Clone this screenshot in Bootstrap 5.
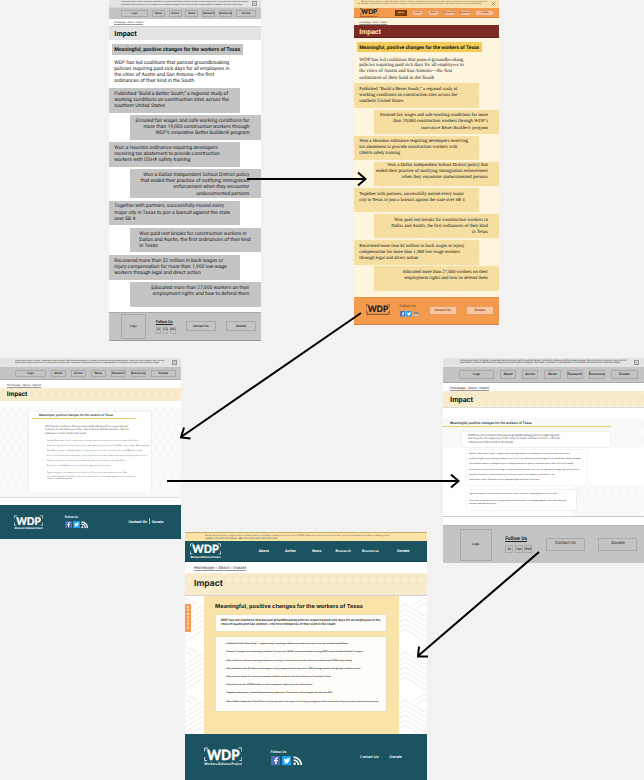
<!DOCTYPE html>
<html lang="en">
<head>
<meta charset="utf-8">
<meta name="viewport" content="width=device-width, initial-scale=1">
<title>Impact page iterations</title>
<link href="https://cdn.jsdelivr.net/npm/bootstrap@5.3.0/dist/css/bootstrap.min.css" rel="stylesheet">
<style>
:root{--hexc:url("data:image/svg+xml,%3Csvg xmlns='http://www.w3.org/2000/svg' width='8' height='13.8'%3E%3Cpath d='M4 0v2.3L8 4.6v4.6L4 11.5 0 9.2V4.6L4 2.3M4 11.5v2.3' fill='none' stroke='%23f1e1b0' stroke-width='.6'/%3E%3C/svg%3E");
--hexg:url("data:image/svg+xml,%3Csvg xmlns='http://www.w3.org/2000/svg' width='8' height='13.8'%3E%3Cpath d='M4 0v2.3L8 4.6v4.6L4 11.5 0 9.2V4.6L4 2.3M4 11.5v2.3' fill='none' stroke='%23f1f1f1' stroke-width='.5'/%3E%3C/svg%3E");
--leaf:url("data:image/svg+xml,%3Csvg xmlns='http://www.w3.org/2000/svg' width='40' height='48'%3E%3Cpath d='M0 20L20 8 40 20M0 25L20 13 40 25M0 30L20 18 40 30M0 35L20 23 40 35M0 40L20 28 40 40M0 45L20 33 40 45M0 2L12 9M0 7L8 12M40 2L28 9M40 7L32 12' fill='none' stroke='%23f3f3f3' stroke-width='1.5'/%3E%3C/svg%3E")}
html,body{margin:0;width:644px;height:780px;overflow:hidden;background:#f2f2f2}
body{font-family:Roboto,"Liberation Sans",sans-serif;color:#222;text-rendering:geometricPrecision}
.board{width:644px;height:780px}
.frame{position:absolute;background:#fff;overflow:hidden;display:flex;flex-direction:column}
.frame>*{flex:none}
.ln{white-space:nowrap;width:max-content}
.b{font-weight:700}
.bx{display:flex;align-items:center;justify-content:center;border:.8px solid #a9a9a9;color:#222;font-weight:500;flex:none;line-height:1}
.strip{background:#e3e3e3;display:flex;justify-content:space-between;line-height:2.2px;font-size:2.3px;color:#333}
.gray{background:#c4c4c4}
.bar{display:flex;align-items:center;justify-content:space-between}
.xbox{border:.6px solid #999;width:5px;height:5px;color:#666}
.xbox svg{display:block;width:100%;height:100%}
.crumb{display:flex;align-items:center;text-decoration:underline;text-decoration-color:#999;color:#333}
.ttl{display:flex;align-items:center;font-weight:700;color:#111}
.hex{background:#f8edce var(--hexc)}
.hexgray{background:#fafafa var(--hexg)}
.teal{background:#1b5460;color:#fff}
.serif{font-family:"Liberation Serif",serif}
.logo{display:block;flex:none}
.soc{display:block;flex:none}

/* wireframe */
#wa{left:109px;top:0;width:152px;height:341px}
#wa .strip{height:8px;padding:1.4px 4px 0 12px;border-bottom:.6px solid #d4d4d4}
#wa nav{height:11.3px;padding:0 5px 0 12px;}
#wa nav .bx{width:13px;height:6.6px;font-size:2.7px}
#wa .crumb{height:6.7px;padding:1px 0 0 5px;font-size:3px}
#wa .ttl{height:14.4px;background:#e3e3e3;padding:.6px 0 0 5.3px;font-size:8.2px;border-top:.8px solid #cfcfcf}
#wa .hd{width:131px;height:11px;margin:3.6px 0 0 3px;background:#c4c4c4;line-height:12.6px;padding-left:2.3px;font-size:5.6px;color:#111}
#wa .par{margin:4.7px 0 0 5.3px;height:28.3px;line-height:6.15px;font-size:5.3px}
#wa .item{width:131px;height:24.8px;background:#c4c4c4;margin-bottom:2.3px;padding:2.9px 0 0 5.3px;line-height:6.15px;font-size:5.3px}
#wa .item.r{margin-left:21px;padding:2.9px 11.7px 0 0}
#wa .item.r .ln{margin-left:auto}
#wa footer{height:29.4px;margin-top:2.3px;border-top:.8px solid #aaa;border-bottom:1px solid #999;padding:0 5px 0 12px}

/* warm colour version */
#wb{left:354px;top:0;width:145px;height:325px;background:#fef5df}
#wb .strip{height:7.5px;background:#f7e2ae;padding:1px 3.5px 0 3px;color:#6b5b33}
#wb nav{height:10.8px;background:#f49a4c;border-bottom:.8px solid #d9843a;padding:.9px 4.5px 0 5.5px}
#wb nav .bx{width:11px;height:6px;background:#f9bf98;border-color:#e39a63;font-size:2.2px;color:#7b3513}
#wb nav .bx.on{background:#8a420f;color:#fbd9ad;border-color:#713408}
#wb .crumb{height:6.9px;padding-left:5.3px;padding-top:1.9px;font-size:2.7px}
#wb .ttl{height:13px;background:#7a2b25;color:#fbe6d0;padding:1.4px 0 0 5.3px;font-size:7.8px;border-bottom:.8px solid #5e1e19}
#wb .hd{width:125px;height:10px;margin:3.9px 0 0 3px;background:#f3cb58;line-height:12px;padding-left:2.3px;font-size:5.3px;color:#111;box-shadow:0 .3px .6px #dcc07a}
#wb .par{margin:4.6px 0 0 5.3px;height:26.7px;line-height:6.05px;font-size:5.3px;color:#111}
#wb .item{color:#111;width:125px;height:24.4px;background:#f4dd9f repeating-linear-gradient(45deg,transparent 0 2px,#f5e0a6 2px 3px);margin-bottom:1.75px;padding:3.6px 0 0 5.3px;line-height:6.05px;font-size:5.3px;box-shadow:0 .3px .6px #e6d5a2}
#wb .item.r{margin-left:20px;padding:3.6px 11.2px 0 0}
#wb .item.r .ln{margin-left:auto}
#wb footer{height:28px;margin-top:4.5px;background:#f49a4c;border-bottom:1px solid #c98149;border-top:.7px solid #e18f4a;padding:0 5px 1px 12px}
#wb footer .bx{background:#f9c79f;border-color:#e39a63;width:28px;height:8.4px;font-size:3.4px;color:#84351e}

/* pattern draft with teal footer */
#wc{left:0;top:358px;width:181px;height:181px}
#wc .strip{height:8.7px;padding:1.6px 4.5px 0 15px}
#wc nav{height:13.5px;padding:1px 5.5px 0 15px;border-bottom:.7px solid #aaa}
#wc nav .bx{width:14.5px;height:7.6px;font-size:3px}
#wc .crumb{height:8px;padding:2px 0 0 6.8px;font-size:3.3px}
#wc .ttl{height:12.4px;padding:.8px 0 0 6.8px;font-size:7px}
#wc main{height:90px;margin-top:7.4px;padding:4px 0 0 29px;border-bottom:.8px solid #ddd}
#wc .sheet{width:122px;height:79.6px;background:#fff;box-shadow:0 .4px 1.5px #ccc;padding:1.3px 0 0 2.6px}
#wc .hd{line-height:4px;font-size:3.2px;padding-left:7.4px;border-bottom:.8px solid #eccb6b;width:104.6px;height:5.4px;color:#444}
#wc .par{margin:6.2px 0 0 13.4px;line-height:3.35px;font-size:3.4px;color:#333}
#wc .list{margin:5.6px 0 0 15.4px;font-size:2.35px;line-height:2.2px;color:#111}
#wc .list .ln{margin-bottom:2.7px}
#wc footer{height:34.3px;margin-top:6.7px;padding:0 17.5px 0 14px}

/* layered draft */
#wd{left:443px;top:358px;width:201px;height:205px}
#wd .strip{height:9px;padding:1.5px 5px 0 17px}
#wd nav{height:16px;padding:.6px 6px 0 16px;border-bottom:.8px solid #aaa}
#wd nav .bx{width:16.3px;height:9px;font-size:3.4px}
#wd .crumb{height:8.3px;padding:2px 0 0 7px;font-size:3.7px}
#wd .ttl{height:16.3px;padding:.2px 0 0 7px;font-size:8px;border-bottom:.8px solid #ddd}
#wd .up{height:30.7px;margin-top:10.2px}
#wd .hd{width:167.5px;height:8.8px;line-height:4px;padding:3px 0 0 7px;font-size:3.6px;border-bottom:.8px solid #eccb6b;color:#444}
#wd .par{width:148.5px;height:15.5px;margin:5px 0 0 18.5px;padding:2px 0 0 6.5px;background:#fff;box-shadow:0 .3px 1.2px #ccc;line-height:3.65px;font-size:3.7px;color:#333}
#wd .low{height:69px;display:flex;flex-direction:column;background:#fff;border-bottom:.8px solid #ccc;padding-left:24px}
#wd .list{background:#fff;box-shadow:0 .4px 1.2px #ccc;font-size:2.5px;line-height:2.4px;color:#111;padding:2.8px 0 0 2px}
#wd .l1{width:119.5px;height:35.5px;margin-top:1.4px}
#wd .l1 .ln{margin-bottom:2.95px}
#wd .l2{width:109px;height:20px}
#wd .corner{height:32.1px;margin:0 0 0 105px;padding:0}
#wd .corner .l2{margin:5px 0 0 -105px}
#wd footer{height:38px;margin-top:7.6px;padding:0 6.5px 0 16.5px;border-top:.7px solid #b5b5b5}

/* final page */
#we{left:185px;top:532px;width:242px;height:248px;font-family:Inter,sans-serif}
#we .strip{height:9.3px;background:#f9e3a6;padding:2px 0 0 20px;line-height:2.7px;font-size:2.4px;border-top:.7px solid #c8ad6a}
#we nav{height:20.7px;padding:0 17.5px 0 5px;border-bottom:.8px solid #10414c;font-weight:700;font-size:3.4px}
#we nav .ln,#we footer .ln{line-height:6px}
#we .crumb{height:11px;padding:1.6px 0 0 9px;font-size:3.9px}
#we .ttl{height:21.6px;padding:1.6px 0 0 9px;font-size:8.6px;color:#2a2a2a}
#we main{height:139.4px;border-top:1px solid #d5d5d5;background:#fff var(--leaf);display:flex}
#we .tab{width:6.3px;height:27.5px;margin:8.5px 12.4px 0 0;background:#f49a4c;color:#fff;font-size:3px;line-height:3.5px;text-align:center;padding-top:1.5px;border-radius:0 .8px .8px 0;font-weight:600}
#we .panel{width:195px;background:#f9e3a8;padding:8px 0 0 11.4px}
#we .hd{font-size:5.6px;line-height:6px;color:#222}
#we .sheet{width:171.6px;background:#fffdf8;border:.6px solid #ece0b6}
#we .s1{margin-top:4.8px;height:17.8px;padding:2.2px 0 0 4.6px;font-size:3.2px;line-height:4.4px;font-weight:600}
#we .s2{margin-top:4.3px;height:75.5px;padding:4.8px 0 0 9.4px;font-size:2.5px;line-height:4px;color:#000;font-weight:600}
#we .s2 .ln{margin-bottom:4.2px}
#we footer{height:46px;padding:0 25px 0 18.5px;font-weight:600}
.arrows{position:absolute;left:0;top:0;pointer-events:none}
</style>
</head>
<body>
<svg width="0" height="0" class="position-absolute"><defs>
<symbol id="wdp" viewBox="0 0 38 19"><path d="M4 1H.6V4.500M34 1H37.400V4.500M.6 10V13.500H3M37.400 10V13.500H35" fill="none" stroke="currentColor" stroke-width=".8"/><text x="2.800" y="12.600" textLength="32.400" lengthAdjust="spacingAndGlyphs" font-family="Lato,sans-serif" font-weight="900" font-size="14" fill="currentColor" stroke="currentColor" stroke-width=".3">WDP</text><text x=".3" y="18" textLength="37.400" lengthAdjust="spacingAndGlyphs" font-family="Inter,sans-serif" font-weight="700" font-size="3.300" fill="currentColor">Workers Defense Project</text></symbol>
<symbol id="fb" viewBox="0 0 20 20"><rect width="20" height="20" rx="2" fill="#4f6fb5"/><path d="M11.500 17V11H14L14.400 8.400H11.500V7Q11.500 5.700 13 5.700H14.500V3.300H12.300Q8.700 3.300 8.700 6.800V8.400H6.300V11H8.700V17Z" fill="#fff"/></symbol>
<symbol id="tw" viewBox="0 0 20 20"><rect width="20" height="20" rx="2" fill="#1da1f2"/><path d="M3.500 14.200Q6.200 14.300 7.500 13.200 5.500 12.800 5 11.200H6.200Q4.200 10.300 4.200 8.200L5.500 8.600Q3.600 6.800 4.800 4.800 7 7.400 10.300 7.600 9.700 4.200 12.900 4 14.200 4 15 4.900L16.800 4.300 15.700 5.900 17.200 5.600 15.800 7.100Q15.800 12 12 14.500 7.700 16.900 3.500 14.200Z" fill="#fff"/></symbol>
<symbol id="rss" viewBox="0 0 20 20"><circle cx="3.500" cy="16.500" r="2.600" fill="currentColor"/><path d="M1 8.500A10.500 10.500 0 0 1 11.500 19M1 2.500A16.500 16.500 0 0 1 17.500 19" fill="none" stroke="currentColor" stroke-width="3.600"/></symbol>
<symbol id="ex" viewBox="0 0 10 10"><path d="M1 1L9 9M9 1L1 9" stroke="currentColor" stroke-width="1.200"/></symbol>
</defs></svg>

<div class="board position-relative">

<section class="frame" id="wa">
<div class="strip"><div><div class="ln" data-w="127">Lorem ipsum dolor sit amet, consectetur adipiscing elit, sed do eiusmod tempor incididunt ut labore et dolore magna aliqua. Ut enim ad minim veniam, quis nostrud</div><div class="ln" data-w="122">exercitation ullamco laboris nisi ut aliquip ex ea commodo consequat. Duis aute irure dolor in reprehenderit in voluptate velit esse cillum dolore</div></div><div class="xbox"><svg><use href="#ex"/></svg></div></div>
<nav class="bar gray"><div class="bx" style="width:27px">Logo</div><div class="bx">About</div><div class="bx">Action</div><div class="bx">News</div><div class="bx">Research</div><div class="bx">Resources</div><div class="bx" style="width:20px">Donate</div></nav>
<div class="crumb"><span class="ln" data-w="29">Homepage › About › Impact</span></div>
<div class="ttl"><span class="ln" data-w="22.5">Impact</span></div>
<div class="hd b"><div class="ln" data-w="126">Meaningful, positive changes for the workers of Texas</div></div>
<div class="par"><div class="ln" data-w="115">WDP has led coalitions that passed groundbreaking</div><div class="ln" data-w="115.500">policies requiring paid sick days for all employees in</div><div class="ln" data-w="100">the cities of Austin and San Antonio—the first</div><div class="ln" data-w="80">ordinances of their kind in the South</div></div>
<div class="item"><div class="ln" data-w="114">Published “Build a Better South,” a regional study of</div><div class="ln" data-w="115">working conditions on construction sites across the</div><div class="ln" data-w="51">southern United States</div></div>
<div class="item r"><div class="ln" data-w="114">Ensured fair wages and safe working conditions for</div><div class="ln" data-w="106">more than 19,000 construction workers through</div><div class="ln" data-w="94">WDP’s innovative Better Builder® program</div></div>
<div class="item"><div class="ln" data-w="103.500">Won a Houston ordinance requiring developers</div><div class="ln" data-w="105.500">receiving tax abatement to provide construction</div><div class="ln" data-w="76">workers with OSHA safety training</div></div>
<div class="item r" style="height:29px"><div class="ln" data-w="106.500">Won a Dallas Independent School District policy</div><div class="ln" data-w="109">that ended their practice of notifying immigration</div><div class="ln" data-w="76">enforcement when they encounter</div><div class="ln" data-w="53">undocumented persons</div></div>
<div class="item"><div class="ln" data-w="109.500">Together with partners, successfully moved every</div><div class="ln" data-w="116">major city in Texas to join a lawsuit against the state</div><div class="ln" data-w="21">over SB 4</div></div>
<div class="item r d-flex flex-column"><div class="me-0 ms-auto" style="width:110px"><div class="ln mx-0" data-w="107.500">Won paid rest breaks for construction workers in</div><div class="ln mx-0" data-w="111.500">Dallas and Austin, the first ordinances of their kind</div><div class="ln mx-0" data-w="18.500">in Texas</div></div></div>
<div class="item" style="margin-top:.500px"><div class="ln" data-w="109">Recovered more than $2 million in back wages or</div><div class="ln" data-w="112.500">injury compensation for more than 1,900 low-wage</div><div class="ln" data-w="86.500">workers through legal and direct action</div></div>
<div class="item r"><div class="ln" data-w="98">Educated more than 27,000 workers on their</div><div class="ln" data-w="97">employment rights and how to defend them</div></div>
<footer class="bar gray"><div class="bx" style="width:24.500px;height:24.500px;font-size:3px">Logo</div><div style="width:20px;height:19px"><div class="ln b text-decoration-underline" data-w="17" style="font-size:4.200px;line-height:9px">Follow Us</div><div class="d-flex justify-content-between" style="margin-top:1.500px"><div class="bx" style="width:5.500px;height:6.500px;font-size:2.600px">fb</div><div class="bx" style="width:5.500px;height:6.500px;font-size:2.600px">Twt</div><div class="bx" style="width:6px;height:6.500px;font-size:2.600px">RSS</div></div></div><div class="bx" style="width:30px;height:10px;font-size:3.200px">Contact Us</div><div class="bx" style="width:30px;height:10px;font-size:3.200px">Donate</div></footer>
</section>

<section class="frame" id="wb">
<div class="strip"><div><div class="ln ms-1" data-w="126">Workers Defense Project's physical offices in Austin, Houston, and Dallas are closed to the public due to coronavirus concerns and the health of</div><div class="ln" data-w="125">our members, staff and community. Our staff continue to work remotely and our hotline remains open. We hope you stay safe and healthy</div></div><svg width="5" height="5"><use href="#ex"/></svg></div>
<nav class="bar"><svg class="logo" width="18.500" height="9.300"><use href="#wdp"/></svg><div class="bar" style="width:99.500px"><div class="bx on" style="width:12px">About</div><div class="bx">Action</div><div class="bx">News</div><div class="bx">Research</div><div class="bx">Resources</div><div class="bx" style="width:19px">Donate</div></div></nav>
<div class="crumb"><span class="ln" data-w="28">Homepage › About › Impact</span></div>
<div class="ttl"><span class="ln" data-w="21.500">Impact</span></div>
<div class="hd b"><div class="ln" data-w="120">Meaningful, positive changes for the workers of Texas</div></div>
<div class="par serif"><div class="ln" data-w="104.500">WDP has led coalitions that passed groundbreaking</div><div class="ln" data-w="104.500">policies requiring paid sick days for all employees in</div><div class="ln" data-w="93">the cities of Austin and San Antonio—the first</div><div class="ln" data-w="75">ordinances of their kind in the South</div></div>
<div class="item serif"><div class="ln" data-w="98.500">Published “Build a Better South,” a regional study of</div><div class="ln" data-w="98">working conditions on construction sites across the</div><div class="ln" data-w="44">southern United States</div></div>
<div class="item r serif"><div class="ln" data-w="108">Ensured fair wages and safe working conditions for more</div><div class="ln" data-w="95">than 19,000 construction workers through WDP’s</div><div class="ln" data-w="67">innovative Better Builder® program</div></div>
<div class="item serif"><div class="ln" data-w="109">Won a Houston ordinance requiring developers receiving</div><div class="ln" data-w="98.500">tax abatement to provide construction workers with</div><div class="ln" data-w="41">OSHA safety training</div></div>
<div class="item r serif" style="padding-top:1.500px"><div class="ln" data-w="101">Won a Dallas Independent School District policy that</div><div class="ln" data-w="112">ended their practice of notifying immigration enforcement</div><div class="ln" data-w="86.500">when they encounter undocumented persons</div></div>
<div class="item serif"><div class="ln" data-w="105">Together with partners, successfully moved every major</div><div class="ln" data-w="106">city in Texas to join a lawsuit against the state over SB 4</div></div>
<div class="item r serif"><div class="ln" data-w="94">Won paid rest breaks for construction workers in</div><div class="ln" data-w="97">Dallas and Austin, the first ordinances of their kind</div><div class="ln" data-w="16">in Texas</div></div>
<div class="item serif"><div class="ln" data-w="105.500">Recovered more than $2 million in back wages or injury</div><div class="ln" data-w="101">compensation for more than 1,900 low-wage workers</div><div class="ln" data-w="59">through legal and direct action</div></div>
<div class="item r serif"><div class="ln" data-w="85">Educated more than 27,000 workers on their</div><div class="ln" data-w="84">employment rights and how to defend them</div></div>
<footer class="bar"><svg class="logo" width="24" height="12"><use href="#wdp"/></svg><div style="width:19.500px;height:14px"><div class="ln" data-w="16" style="font-size:3.800px;line-height:7px;color:#5b3a26">Follow Us</div><div class="d-flex justify-content-between" style="margin-top:.800px"><svg class="soc" width="5.800" height="5.800"><use href="#fb"/></svg><svg class="soc" width="5.800" height="5.800"><use href="#tw"/></svg><div class="bx" style="width:5.600px;height:5.800px;font-size:2.400px;background:#c8c4bd;color:#222">RSS</div></div></div><div class="bx">Contact Us</div><div class="bx">Donate</div></footer>
</section>

<section class="frame" id="wc">
<div class="strip"><div><div class="ln" data-w="150">Lorem ipsum dolor sit amet, consectetur adipiscing elit, sed do eiusmod tempor incididunt ut labore et dolore magna aliqua. Ut enim ad minim veniam, quis nostrud</div><div class="ln" data-w="145">exercitation ullamco laboris nisi ut aliquip ex ea commodo consequat. Duis aute irure dolor in reprehenderit in voluptate velit esse cillum dolore eu fugiat</div></div><div class="xbox"><svg><use href="#ex"/></svg></div></div>
<nav class="bar gray"><div class="bx" style="width:30.500px">Logo</div><div class="bx">About</div><div class="bx">Action</div><div class="bx">News</div><div class="bx">Research</div><div class="bx">Resources</div><div class="bx" style="width:24.500px">Donate</div></nav>
<div class="crumb"><span class="ln" data-w="34.500">Homepage › About › Impact</span></div>
<div class="ttl hex"><span class="ln" data-w="20.500">Impact</span></div>
<main class="hexgray"><div class="sheet">
<div class="hd b"><div class="ln" data-w="74">Meaningful, positive changes for the workers of Texas</div></div>
<div class="par serif"><div class="ln" data-w="83">WDP has led coalitions that passed groundbreaking policies requiring paid</div><div class="ln" data-w="84">sick days for all employees in the cities of Austin and San Antonio—the first</div><div class="ln" data-w="41">ordinances of their kind in the South</div></div>
<div class="list serif"><div class="ln" data-w="91">Published “Build a Better South,” a regional study of working conditions on construction sites across the southern United States</div><div class="ln" data-w="101.500">Ensured fair wages and safe working conditions for more than 19,000 construction workers through WDP’s innovative Better Builder® program</div><div class="ln" data-w="94">Won a Houston ordinance requiring developers receiving tax abatement to provide construction workers with OSHA safety training</div><div class="ln" data-w="100">Recovered more than $2 million in back wages or injury compensation for more than 1,900 low-wage workers through legal and direct action</div><div class="ln" data-w="78">Won paid rest breaks for construction workers in Dallas and Austin, the first ordinances of their kind in Texas</div><div class="ln" data-w="64" style="margin-bottom:4.900px">Educated more than 27,000 workers on their employment rights and how to defend them</div><div class="ln" data-w="80" style="margin-bottom:2px">Together with partners, successfully moved every major city in Texas to join a lawsuit against the state over SB 4</div><div class="ln mb-0" data-w="88">Won a Dallas Independent School District policy that ended their practice of notifying immigration enforcement when they</div><div class="ln" data-w="25">encounter undocumented persons</div></div>
</div></main>
<footer class="teal bar"><svg class="logo" width="29" height="14.500"><use href="#wdp"/></svg><div style="width:24px;height:15px;margin-right:18px"><div class="ln b" data-w="13.500" style="font-size:2.900px;line-height:6px">Follow Us</div><div class="d-flex justify-content-between" style="margin-top:.800px"><svg class="soc" width="7" height="7"><use href="#fb"/></svg><svg class="soc" width="7" height="7"><use href="#tw"/></svg><svg class="soc" width="7.500" height="7.500"><use href="#rss"/></svg></div></div><div class="d-flex align-items-center b" style="font-size:3.500px;gap:2.200px;line-height:6px"><span class="ln" data-w="18.500">Contact Us</span><span style="width:.8px;height:6.500px;background:#d9b95c;margin-top:-2px"></span><span class="ln" data-w="11.500">Donate</span></div></footer>
</section>

<section class="frame" id="wd">
<div class="strip"><div><div class="ln" data-w="167">Lorem ipsum dolor sit amet, consectetur adipiscing elit, sed do eiusmod tempor incididunt ut labore et dolore magna aliqua. Ut enim ad minim veniam, quis nostrud</div><div class="ln" data-w="161">exercitation ullamco laboris nisi ut aliquip ex ea commodo consequat. Duis aute irure dolor in reprehenderit in voluptate velit esse cillum dolore eu fugiat</div></div><div class="xbox"><svg><use href="#ex"/></svg></div></div>
<nav class="bar gray"><div class="bx" style="width:35px">Logo</div><div class="bx">About</div><div class="bx">Action</div><div class="bx">News</div><div class="bx">Research</div><div class="bx">Resources</div><div class="bx" style="width:27px">Donate</div></nav>
<div class="crumb"><span class="ln" data-w="39">Homepage › About › Impact</span></div>
<div class="ttl hex"><span class="ln" data-w="23">Impact</span></div>
<div class="up hexgray"><div class="hd b"><div class="ln" data-w="82">Meaningful, positive changes for the workers of Texas</div></div>
<div class="par serif"><div class="ln" data-w="91">WDP has led coalitions that passed groundbreaking policies requiring paid</div><div class="ln" data-w="92">sick days for all employees in the cities of Austin and San Antonio—the first</div><div class="ln" data-w="45">ordinances of their kind in the South</div></div></div>
<div class="low"><div class="list l1 serif"><div class="ln" data-w="101">Published “Build a Better South,” a regional study of working conditions on construction sites across the southern United States</div><div class="ln" data-w="113">Ensured fair wages and safe working conditions for more than 19,000 construction workers through WDP’s innovative Better Builder® program</div><div class="ln" data-w="104">Won a Houston ordinance requiring developers receiving tax abatement to provide construction workers with OSHA safety training</div><div class="ln" data-w="111">Recovered more than $2 million in back wages or injury compensation for more than 1,900 low-wage workers through legal and direct action</div><div class="ln" data-w="86">Won paid rest breaks for construction workers in Dallas and Austin, the first ordinances of their kind in Texas</div><div class="ln" data-w="70">Educated more than 27,000 workers on their employment rights and how to defend them</div></div>
<div class="corner hexgray d-flex"><div class="list l2 serif flex-shrink-0"><div class="ln" data-w="88" style="margin:.600px 0 4.500px">Together with partners, successfully moved every major city in Texas to join a lawsuit against the state over SB 4</div><div class="ln" data-w="98">Won a Dallas Independent School District policy that ended their practice of notifying immigration enforcement when they</div><div class="ln" data-w="27">encounter undocumented persons</div></div></div></div>
<footer class="bar gray"><div class="bx" style="width:32px;height:32px;font-size:3.300px">Logo</div><div style="width:27px;height:20px"><div class="ln b text-decoration-underline" data-w="22" style="font-size:5px;line-height:8px">Follow Us</div><div class="d-flex justify-content-between" style="margin-top:2.500px"><div class="bx" style="width:8.300px;height:8.300px;font-size:3.300px">fb</div><div class="bx" style="width:8.300px;height:8.300px;font-size:3.300px">Twt</div><div class="bx" style="width:8px;height:8.300px;font-size:3.300px">RSS</div></div></div><div class="bx fw-normal" style="width:39px;height:12.600px;font-size:4.200px">Contact Us</div><div class="bx fw-normal" style="width:39px;height:12.600px;font-size:4.200px">Donate</div></footer>
</section>

<section class="frame" id="we">
<div class="strip"><div><div class="ln" data-w="185">Workers Defense Project's physical offices in Austin, Houston, and Dallas continue to be closed due to COVID-19 but our members can reach us online, by phone and through our hotline as usual to get help</div><div class="ln" data-w="72.500">Houston: (713) 000-0000 Dallas: (469) 000-0000 Austin: (512) 000-0000</div></div></div>
<nav class="bar teal"><svg class="logo" width="31" height="15.500"><use href="#wdp"/></svg><div class="bar" style="width:151px"><span class="ln" data-w="10.500">About</span><span class="ln" data-w="11" style="margin-left:2px">Action</span><span class="ln" data-w="9.500" style="margin-left:2px">News</span><span class="ln" data-w="15.500">Research</span><span class="ln" data-w="17" style="margin-left:-3px">Resources</span><span class="ln" data-w="12.500" style="margin-left:4px">Donate</span></div></nav>
<div class="crumb"><span class="ln" data-w="52">Homepage › About › Impact</span></div>
<div class="ttl hex"><span class="ln" data-w="29">Impact</span></div>
<main><div class="tab">D<br>O<br>N<br>A<br>T<br>E<br>♡</div><div class="panel">
<div class="hd b"><div class="ln" data-w="148">Meaningful, positive changes for the workers of Texas</div></div>
<div class="sheet s1"><div class="ln" data-w="159.500">WDP has led coalitions that passed groundbreaking policies requiring paid sick days for all employees in the</div><div class="ln" data-w="115">cities of Austin and San Antonio—the first ordinances of their kind in the South</div></div>
<div class="sheet s2"><div class="ln" data-w="123.500">• Published “Build a Better South,” a regional study of working conditions on construction sites across the southern United States</div><div class="ln" data-w="138">• Ensured fair wages and safe working conditions for more than 19,000 construction workers through WDP’s innovative Better Builder® program</div><div class="ln" data-w="127">• Won a Houston ordinance requiring developers receiving tax abatement to provide construction workers with OSHA safety training</div><div class="ln" data-w="136">• Recovered more than $2 million in back wages or injury compensation for more than 1,900 low-wage workers through legal and direct action</div><div class="ln" data-w="106">• Won paid rest breaks for construction workers in Dallas and Austin, the first ordinances of their kind in Texas</div><div class="ln" data-w="87">• Educated more than 27,000 workers on their employment rights and how to defend them</div><div class="ln" data-w="108">• Together with partners, successfully moved every major city in Texas to join a lawsuit against the state over SB 4</div><div class="ln" data-w="153">• Won a Dallas Independent School District policy that ended their practice of notifying immigration enforcement when they encounter undocumented persons</div></div>
</div></main>
<footer class="teal bar"><svg class="logo" width="38.500" height="19.200"><use href="#wdp"/></svg><div style="width:32px;height:18px;margin-right:29px"><div class="ln" data-w="16" style="font-size:3.500px;padding-top:1.500px">Follow Us</div><div class="d-flex justify-content-between" style="margin-top:.800px"><svg class="soc" width="9.500" height="9.500"><use href="#fb"/></svg><svg class="soc" width="9.500" height="9.500"><use href="#tw"/></svg><svg class="soc" width="9.500" height="9.500"><use href="#rss"/></svg></div></div><div class="d-flex" style="font-size:3.600px;gap:11px"><span class="ln" data-w="18.500">Contact Us</span><span class="ln" data-w="12.500">Donate</span></div></footer>
</section>

<svg class="arrows" width="644" height="780" fill="none" stroke="#000" stroke-width="2"><path d="M247 179H365M358 172.500L365.500 179L358 185.500"/><path d="M361 313L181 437M184 427.500L181 437.500L190.500 438.500"/><path d="M167 481H458M451 474.500L458.500 481L451 487.500"/><path d="M539 552L418 656M419 646.500L418 656.500L428 656.500"/></svg>
</div>
<script src="https://cdn.jsdelivr.net/npm/bootstrap@5.3.0/dist/js/bootstrap.bundle.min.js"></script>
<script>
// Scale the type of each line so that its width equals data-w.
document.querySelectorAll('.ln[data-w]').forEach(function (el) {
  var want = parseFloat(el.dataset.w), have = el.getBoundingClientRect().width;
  el.style.fontSize = parseFloat(getComputedStyle(el).fontSize) * want / have + 'px';
});
</script>
</body>
</html>
